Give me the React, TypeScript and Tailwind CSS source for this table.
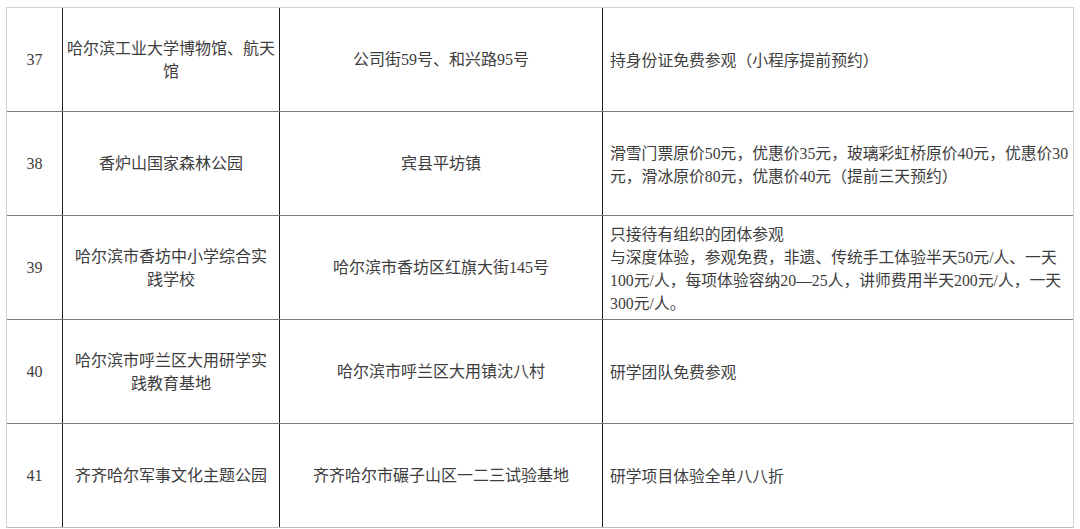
const rows: { no: string; name: string[]; addr: string[]; note: string[] }[] = [
  {
    no: "37",
    name: ["哈尔滨工业大学博物馆、航天", "馆"],
    addr: ["公司街59号、和兴路95号"],
    note: ["持身份证免费参观（小程序提前预约）"],
  },
  {
    no: "38",
    name: ["香炉山国家森林公园"],
    addr: ["宾县平坊镇"],
    note: [
      "滑雪门票原价50元，优惠价35元，玻璃彩虹桥原价40元，优惠价30",
      "元，滑冰原价80元，优惠价40元（提前三天预约）",
    ],
  },
  {
    no: "39",
    name: ["哈尔滨市香坊中小学综合实", "践学校"],
    addr: ["哈尔滨市香坊区红旗大街145号"],
    note: [
      "只接待有组织的团体参观",
      "与深度体验，参观免费，非遗、传统手工体验半天50元/人、一天",
      "100元/人，每项体验容纳20—25人，讲师费用半天200元/人，一天",
      "300元/人。",
    ],
  },
  {
    no: "40",
    name: ["哈尔滨市呼兰区大用研学实", "践教育基地"],
    addr: ["哈尔滨市呼兰区大用镇沈八村"],
    note: ["研学团队免费参观"],
  },
  {
    no: "41",
    name: ["齐齐哈尔军事文化主题公园"],
    addr: ["齐齐哈尔市碾子山区一二三试验基地"],
    note: ["研学项目体验全单八八折"],
  },
];

export default function App() {
  return (
    <div
      className="w-[1080px] h-[529px] bg-white pt-[7px] pl-[6px] text-[16px] leading-[23px] text-[#3d3d3d]"
      style={{ fontFamily: '"Liberation Serif", "Noto Sans CJK SC", serif' }}
    >
      <div className="w-[1068px] border-t border-l border-r border-[#cfcfcf]">
        {rows.map((r, i) => (
          <div
            key={r.no}
            className={`flex h-[104px] ${i === rows.length - 1 ? "h-[103px] border-b border-[#bdbdbd]" : "border-b border-[#7a7a7a]"}`}
          >
            <div className="w-[56px] shrink-0 border-r border-[#1e1e1e] flex items-center justify-center">
              {r.no}
            </div>
            <div className="w-[217px] shrink-0 border-r border-[#1e1e1e] flex flex-col items-center justify-center">
              {r.name.map((l) => (
                <div key={l} className="whitespace-nowrap">
                  {l}
                </div>
              ))}
            </div>
            <div className="w-[323px] shrink-0 border-r border-[#1e1e1e] flex flex-col items-center justify-center">
              {r.addr.map((l) => (
                <div key={l} className="whitespace-nowrap">
                  {l}
                </div>
              ))}
            </div>
            <div className="flex-1 flex flex-col justify-center pl-[7px] pt-[2px] text-[15.8px]">
              {r.note.map((l) => (
                <div key={l} className="whitespace-nowrap">
                  {l}
                </div>
              ))}
            </div>
          </div>
        ))}
      </div>
    </div>
  );
}
